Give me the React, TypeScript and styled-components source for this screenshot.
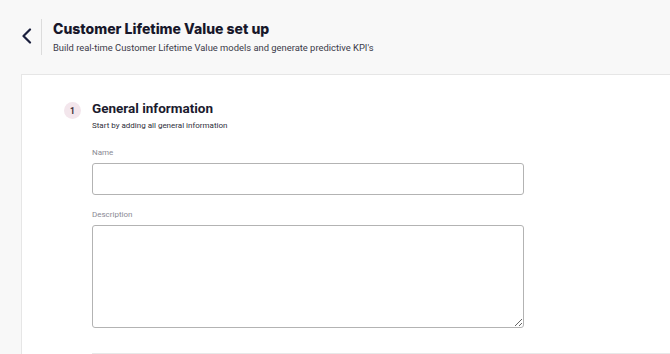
import * as React from "react";
import styled, {createGlobalStyle} from "styled-components";

const Global = createGlobalStyle`
  html, body {
    margin: 0;
    padding: 0;
    background: #f8f8f8;
    overflow: hidden;
  }
  body {
    font-family: Roboto, "Liberation Sans", sans-serif;
    color: #1d1d2b;
  }
`

const Page = styled.div`
  width: 670px;
  height: 354px;
  display: flex;
  flex-flow: column nowrap;
  overflow: hidden;
`

const Header = styled.div`
  display: flex;
  align-items: flex-start;
  flex-shrink: 0;
  height: 74px;
  padding: 19px 0 0 21px;
  box-sizing: border-box;
`

const Back = styled.button`
  width: 21px;
  height: 36px;
  padding: 0;
  border: none;
  border-right: 1px solid #dcdcdc;
  background: transparent;
  display: flex;
  align-items: flex-start;
  padding-top: 9px;
  cursor: pointer;
`

const Titles = styled.div`
  padding-left: 11px;
  padding-top: 2px;
  display: flex;
  flex-flow: column nowrap;
`

const Title = styled.h1`
  margin: 0;
  font-family: Inter, "Liberation Sans", sans-serif;
  font-weight: 800;
  font-size: 14px;
  line-height: 16px;
  color: #17172a;
`

const Subtitle = styled.div`
  margin-top: 5px;
  font-size: 9.4px;
  line-height: 12px;
  color: #3a3a48;
`

const Card = styled.div`
  flex: 1;
  margin-left: 21px;
  background: #fff;
  border-top: 1px solid #e6e6e6;
  border-left: 1px solid #e6e6e6;
  padding: 25px 0 0 42px;
  display: flex;
  align-items: flex-start;
`

const Step = styled.div`
  width: 17px;
  height: 17px;
  border-radius: 50%;
  background: #f3e6ec;
  color: #3b2a33;
  font-size: 8.5px;
  font-weight: 700;
  display: flex;
  align-items: center;
  justify-content: center;
  margin-top: 2px;
  flex-shrink: 0;
`

const Section = styled.div`
  margin-left: 11px;
  display: flex;
  flex-flow: column nowrap;
  width: 432px;
`

const SectionTitle = styled.h2`
  margin: 0;
  font-size: 13.5px;
  line-height: 17px;
  font-weight: 700;
  color: #1b1b2e;
`

const SectionHint = styled.div`
  margin-top: 4px;
  font-size: 8px;
  line-height: 10px;
  color: #2e2e3a;
`

const Field = styled.label<{$first?: boolean}>`
  display: flex;
  flex-flow: column nowrap;
  margin-top: ${p => p.$first ? "17px" : "15px"};
`

const Label = styled.span`
  font-size: 8px;
  line-height: 10px;
  color: #8a8a94;
  margin-bottom: 5px;
`

const Input = styled.input`
  box-sizing: border-box;
  width: 432px;
  height: 32px;
  border: 1px solid #b3b3b3;
  border-radius: 3px;
  background: #fff;
  outline: none;
`

const TextArea = styled.textarea`
  box-sizing: border-box;
  width: 432px;
  height: 103px;
  border: 1px solid #b3b3b3;
  border-radius: 3px;
  background: #fff;
  outline: none;
  resize: vertical;
  margin: 0;
`

const Divider = styled.div`
  margin-top: 25px;
  width: 600px;
  border-top: 1px solid #e8e8e8;
`

export default function App() {
    return (
        <Page>
            <Global/>
            <Header>
                <Back aria-label="back">
                    <svg width="11" height="16" viewBox="0 0 11 16">
                        <path d="M9 1.5 L2.5 8 L9 14.5" fill="none" stroke="#1a1f3d" strokeWidth="2.2"
                              strokeLinecap="round" strokeLinejoin="round"/>
                    </svg>
                </Back>
                <Titles>
                    <Title>Customer Lifetime Value set up</Title>
                    <Subtitle>Build real-time Customer Lifetime Value models and generate predictive KPI's</Subtitle>
                </Titles>
            </Header>
            <Card>
                <Step>1</Step>
                <Section>
                    <SectionTitle>General information</SectionTitle>
                    <SectionHint>Start by adding all general information</SectionHint>
                    <Field $first>
                        <Label>Name</Label>
                        <Input/>
                    </Field>
                    <Field>
                        <Label>Description</Label>
                        <TextArea/>
                    </Field>
                    <Divider/>
                </Section>
            </Card>
        </Page>
    )
}
